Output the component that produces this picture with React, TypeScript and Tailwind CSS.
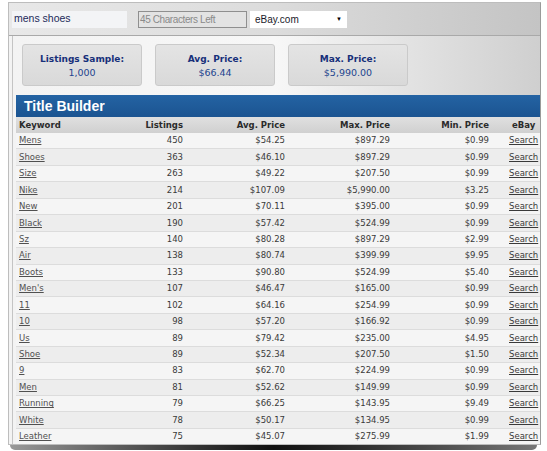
const stats = [
  { label: 'Listings Sample:', value: '1,000' },
  { label: 'Avg. Price:', value: '$66.44' },
  { label: 'Max. Price:', value: '$5,990.00' },
]

const rows: [string, number, string, string, string][] = [
  ['Mens', 450, '$54.25', '$897.29', '$0.99'],
  ['Shoes', 363, '$46.10', '$897.29', '$0.99'],
  ['Size', 263, '$49.22', '$207.50', '$0.99'],
  ['Nike', 214, '$107.09', '$5,990.00', '$3.25'],
  ['New', 201, '$70.11', '$395.00', '$0.99'],
  ['Black', 190, '$57.42', '$524.99', '$0.99'],
  ['Sz', 140, '$80.28', '$897.29', '$2.99'],
  ['Air', 138, '$80.74', '$399.99', '$9.95'],
  ['Boots', 133, '$90.80', '$524.99', '$5.40'],
  ["Men's", 107, '$46.47', '$165.00', '$0.99'],
  ['11', 102, '$64.16', '$254.99', '$0.99'],
  ['10', 98, '$57.20', '$166.92', '$0.99'],
  ['Us', 89, '$79.42', '$235.00', '$4.95'],
  ['Shoe', 89, '$52.34', '$207.50', '$1.50'],
  ['9', 83, '$62.70', '$224.99', '$0.99'],
  ['Men', 81, '$52.62', '$149.99', '$0.99'],
  ['Running', 79, '$66.25', '$143.95', '$9.49'],
  ['White', 78, '$50.17', '$134.95', '$0.99'],
  ['Leather', 75, '$45.07', '$275.99', '$1.99'],
]

const cols = 'grid grid-cols-[120px_47px_102px_105px_99px_60px]'

export default function App() {
  return (
    <div className="flex h-[451px] w-[547px] flex-col overflow-hidden bg-white font-['DejaVu_Sans',sans-serif]">
      <div className="ml-[8px] mt-[2px] flex h-[443px] w-[533px] flex-col overflow-hidden border border-[#bdbdbd] border-r-[#9a9a9a]">
        {/* barra de busca */}
        <div className="flex h-[33px] shrink-0 items-center border-b border-[#a9a9a9] bg-gradient-to-r from-[#e8e8e8] via-[#dcdcdc] to-[#c4c4c4] pl-[3px] font-['Liberation_Sans',Arial,sans-serif]">
          <div className="flex h-[17px] w-[115px] items-center bg-[#f3f4f6] pl-[2px] text-[10.5px] text-[#1c2a5a]">
            mens shoes
          </div>
          <div className="ml-[11px] flex h-[17px] w-[109px] items-center border border-[#8f8f8f] bg-[#e3e3e3] pl-[1px] text-[10px] tracking-[-0.4px] text-[#8a8a8a]">
            45 Characters Left
          </div>
          <div className="ml-[3px] flex h-[17px] w-[97px] items-center justify-between bg-white pl-[5px] pr-[5px] text-[10px] text-[#1a1a2a]">
            <span>eBay.com</span>
            <span className="text-[6px] text-black">▼</span>
          </div>
        </div>

        <div className="flex flex-1 flex-col bg-gradient-to-r from-[#f3f3f3] via-[#f7f7f7] to-[#cfcfcf] pl-[3px]">
          <div className="flex flex-1 flex-col border-l border-[#c4c4c4]">
            {/* resumo */}
            <div className="flex gap-[13px] pl-[9px] pt-[8px]">
              {stats.map((s) => (
                <div
                  key={s.label}
                  className="flex h-[42px] w-[120px] flex-col items-center justify-center rounded-[3px] border border-[#cacaca] bg-gradient-to-b from-[#e4e4e4] to-[#d9d9d9] pt-[2px] text-[9px] leading-[13px] text-[#17307a]"
                >
                  <span className="font-bold">{s.label}</span>
                  <span className="text-[9.5px] text-[#22448e]">{s.value}</span>
                </div>
              ))}
            </div>

            <div className="ml-[3px] mt-[9px] flex flex-col">
              <div className="flex h-[22px] items-center bg-gradient-to-b from-[#2463a3] to-[#1b5491] pl-[8px] font-['Liberation_Sans',Arial,sans-serif] text-[14px] font-bold text-white">
                Title Builder
              </div>

              <div className={`${cols} h-[16px] items-center bg-gradient-to-b from-[#e0e0e0] to-[#d0d0d0] text-[8.5px] font-bold text-[#2b2b2b]`}>
                <span className="pl-[3px]">Keyword</span>
                <span className="text-right">Listings</span>
                <span className="text-right">Avg. Price</span>
                <span className="text-right">Max. Price</span>
                <span className="text-right">Min. Price</span>
                <span className="pl-[23px]">eBay</span>
              </div>

              {rows.map(([kw, n, avg, max, min], i) => (
                <div
                  key={kw}
                  className={`${cols} h-[16.44px] items-center border-b border-[#dcdcdc] text-[8.5px] text-[#3a3a3a] ${
                    i % 2 === 0 ? 'bg-[#f5f5f5]' : 'bg-[#ededed]'
                  }`}
                >
                  <span className="pl-[3px] text-[#505050] underline">{kw}</span>
                  <span className="text-right">{n}</span>
                  <span className="text-right">{avg}</span>
                  <span className="text-right">{max}</span>
                  <span className="text-right">{min}</span>
                  <span className="pl-[20px] text-[#3a3a3a] underline">Search</span>
                </div>
              ))}
            </div>
          </div>
        </div>
      </div>
      {/* sombra da página */}
      <div className="mx-[10px] h-[5px] rounded-b-full bg-gradient-to-r from-[#999] via-[#111] to-[#777]" />
    </div>
  )
}
